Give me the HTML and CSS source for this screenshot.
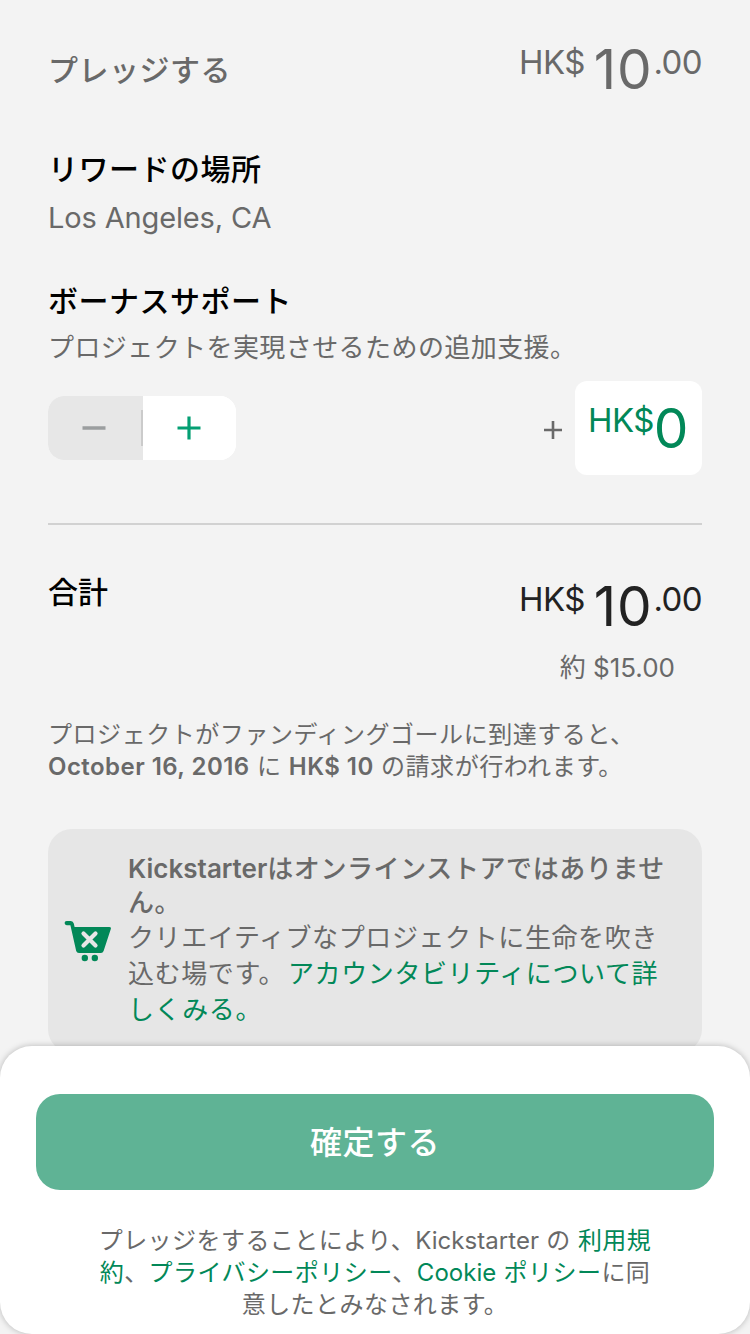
FILE: index.html
```html
<!DOCTYPE html>
<html lang="ja">
<head>
<meta charset="utf-8">
<title>プレッジ</title>
<link rel="stylesheet" href="styles.css">
</head>
<body>
<div class="screen">
  <main class="content">
    <section class="row pledge">
      <h2 class="title muted">プレッジする</h2>
      <div class="amount muted"><span class="cur">HK$</span><span class="num">10</span><span class="dec">.00</span></div>
    </section>
    <section class="location">
      <h2 class="title">リワードの場所</h2>
      <p class="place">Los Angeles, CA</p>
    </section>
    <section class="bonus">
      <h2 class="title">ボーナスサポート</h2>
      <p class="desc">プロジェクトを実現させるための追加支援。</p>
      <div class="controls">
        <div class="stepper">
          <button class="step minus" aria-label="減らす"><svg width="24" height="24" viewBox="0 0 24 24"><path d="M0.5 12H23.5" stroke="#9b9e9f" stroke-width="3.4"/></svg></button>
          <button class="step plus" aria-label="増やす"><svg width="24" height="24" viewBox="0 0 24 24"><path d="M0.5 12H23.5M12 0.5V23.5" stroke="#049f73" stroke-width="3.2"/></svg></button>
        </div>
        <div class="bonus-value">
          <svg class="add" width="20" height="20" viewBox="0 0 20 20"><path d="M1 10H19M10 1V19" stroke="#696969" stroke-width="2.6"/></svg>
          <div class="field"><span class="cur">HK$</span><span class="num">0</span></div>
        </div>
      </div>
    </section>
    <hr class="divider">
    <section class="row total">
      <h2 class="title">合計</h2>
      <div class="amount"><span class="cur">HK$</span><span class="num">10</span><span class="dec">.00</span></div>
    </section>
    <p class="approx">約 $15.00</p>
    <p class="charge">プロジェクトがファンディングゴールに到達すると、<br><b>October 16, 2016</b> に <b>HK$ 10</b> の請求が行われます。</p>
    <section class="note">
      <svg class="cart" width="48" height="42" viewBox="0 0 48 42"><path d="M2.7 0H6.8Q9.2 0 9.8 2.5L10.6 6H45.3Q47.5 6 46.8 8L39.6 30Q38.8 32 37 32H15Q12.8 32 12.2 30L6.4 4.2H2.7A2.1 2.1 0 0 1 2.7 0Z" fill="#028858"/><path d="M19.5 12.6L31.5 24.6M31.5 12.6L19.5 24.6" stroke="#e6e6e6" stroke-width="4.2" stroke-linecap="round"/><circle cx="20.8" cy="37" r="3.2" fill="#028858"/><circle cx="30.8" cy="37" r="3.2" fill="#028858"/></svg>
      <div class="note-text">
        <p class="note-title"><span class="brand">Kickstarter</span>はオンラインストアではありませ<br>ん。</p>
        <p class="note-body">クリエイティブなプロジェクトに生命を吹き<br>込む場です。<a>アカウンタビリティについて詳<br>しくみる。</a></p>
      </div>
    </section>
  </main>
  <footer class="sheet">
    <button class="confirm">確定する</button>
    <p class="legal">プレッジをすることにより、<span class="latin">Kickstarter</span> の <a>利用規<br>約</a>、<a>プライバシーポリシー</a>、<a><span class="latin">Cookie</span> ポリシー</a>に同<br>意したとみなされます。</p>
  </footer>
</div>
</body>
</html>
```
FILE: styles.css
```css
* { box-sizing: border-box; margin: 0; padding: 0; }
body {
  width: 750px; height: 1334px; overflow: hidden;
  background: #f3f3f3; color: #222;
  font-family: Inter, "Noto Sans CJK JP", sans-serif;
  font-kerning: normal;
}
button { border: 0; font-family: inherit; }
a { color: #028858; }
.screen { display: flex; flex-direction: column; height: 1334px; }
.content { flex: 0 0 1046px; overflow: hidden; padding: 41px 48px 0; }
.row { display: flex; justify-content: space-between; align-items: flex-start; }
.title { font-size: 30px; line-height: 44px; font-weight: 500; color: #000; letter-spacing: .5px; white-space: nowrap; }
.pledge .title { margin-top: 7px; }
.title.muted, .amount.muted { color: #696969; }
.amount { display: flex; align-items: flex-start; height: 56px; color: #222; }
.cur, .dec { font-size: 33px; line-height: 42px; letter-spacing: -.6px; }
.num { font-size: 55px; line-height: 56px; letter-spacing: .8px; }
.amount .num { margin-left: 9px; }
.amount .dec { margin-left: 1px; }
.location { margin-top: 50px; }
.place { font-size: 29px; line-height: 40px; margin-top: 7px; color: #696969; letter-spacing: -.14px; }
.bonus { margin-top: 41px; }
.desc { font-size: 26px; line-height: 36px; margin-top: 7px; color: #696969; letter-spacing: .42px; white-space: nowrap; }
.controls { display: flex; justify-content: space-between; align-items: center; margin-top: 15px; height: 94px; }
.stepper { display: flex; width: 188px; height: 64px; border-radius: 16px; overflow: hidden; background: #fff; }
.step { width: 94px; display: flex; align-items: center; justify-content: center; background: #fff; }
.minus { width: 95px; padding-right: 2px; background: linear-gradient(#cbcbcb, #cbcbcb) right center / 2px 36px no-repeat #e7e7e7; }
.bonus-value { display: flex; align-items: center; gap: 12px; }
.add { margin-top: 4px; }
.field { width: 127px; height: 94px; border-radius: 12px; background: #fff; color: #028858; display: flex; padding: 19px 0 0 13px; }
.field .cur { line-height: 40px; }
.divider { border: 0; height: 2px; margin-top: 48px; background: #d1d1d1; }
.total { margin-top: 53px; }
.total .title { margin-top: -8px; letter-spacing: 0; }
.approx { font-size: 26px; line-height: 36px; margin-top: 16px; padding-right: 27px; text-align: right; color: #696969; }
.charge { font-size: 24px; line-height: 32px; margin-top: 33px; color: #696969; letter-spacing: .55px; white-space: nowrap; }
.charge b { font-weight: 600; letter-spacing: .46px; }
.note { display: flex; align-items: center; height: 224px; margin-top: 46px; padding-left: 16px; border-radius: 24px; background: #e6e6e6; color: #696969; }
.cart { flex: none; margin: 2px 16px 0 0; }
.note-text { width: 550px; font-size: 26px; margin-top: -2px; }
.note-title { font-weight: 500; line-height: 34px; letter-spacing: .6px; white-space: nowrap; }
.brand { font-weight: 600; letter-spacing: 0; }
.note-body { line-height: 36px; letter-spacing: .6px; white-space: nowrap; }
.note-body a { margin-left: 3px; }
.sheet { flex: 1; display: flex; flex-direction: column; align-items: center; position: relative; padding-top: 48px; border-radius: 32px; background: #fff; box-shadow: 0 0 6px rgba(0,0,0,.25); }
.confirm { width: 678px; height: 96px; flex: none; padding-bottom: 5px; border-radius: 24px; background: #5fb395; color: #fff; font-size: 32px; font-weight: 500; letter-spacing: .5px; }
.legal { margin-top: 35px; font-size: 24px; line-height: 32px; letter-spacing: .45px; text-align: center; color: #696969; white-space: nowrap; }
.latin { letter-spacing: .05px; }
```
